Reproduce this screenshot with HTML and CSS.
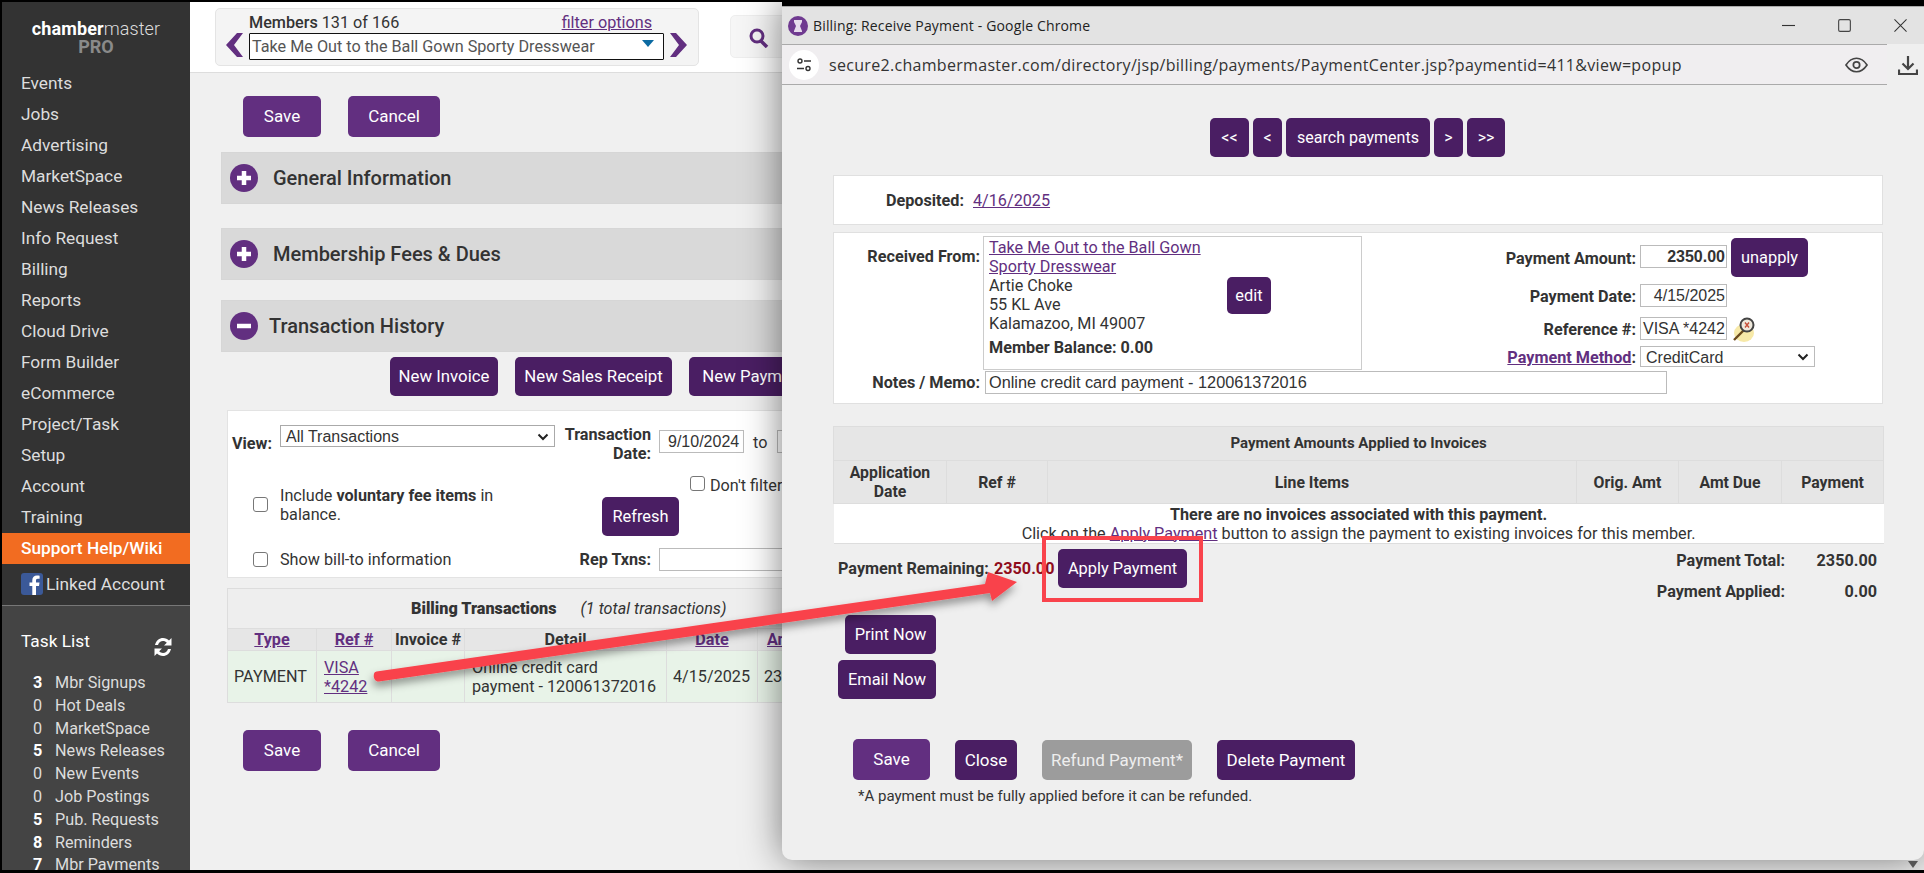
FILE: index.html
```html
<!DOCTYPE html>
<html lang="en">
<head>
<meta charset="utf-8">
<title>Billing: Receive Payment</title>
<link rel="stylesheet" href="styles.css">
</head>
<body>
<div class="page">
  <aside class="sidebar">
    <div class="logo">
      <div class="logo-name"><b>chamber</b>master</div>
      <div class="logo-pro">PRO</div>
    </div>
    <nav class="nav">
      <a>Events</a><a>Jobs</a><a>Advertising</a><a>MarketSpace</a><a>News Releases</a><a>Info Request</a><a>Billing</a><a>Reports</a><a>Cloud Drive</a><a>Form Builder</a><a>eCommerce</a><a>Project/Task</a><a>Setup</a><a>Account</a><a>Training</a><a class="active">Support Help/Wiki</a>
    </nav>
    <div class="linked">
      <svg class="fb" viewBox="0 0 22 22"><rect width="22" height="22" rx="3" fill="#3b5998"/><path d="M15 22v-9h3l.5-3.500H15V7.500c0-1 .4-1.700 1.800-1.700H18.600V2.700C18 2.600 17 2.500 16 2.500c-2.800 0-4.700 1.700-4.700 4.700V9.500H8.500V13h2.800v9z" fill="#fff"/></svg>
      <span>Linked Account</span>
    </div>
    <div class="tasks">
      <div class="task-head">
        <span>Task List</span>
        <svg class="refresh" viewBox="0 0 20 22"><path d="M2 9C3 4.500 6.500 2 10 2c2.500 0 4.500 1 6 2.500L18.500 2v7.500H11l2.800-2.800C12.800 5.700 11.500 5 10 5 7.800 5 5.800 6.500 5 9zM18 13c-1 4.500-4.500 7-8 7-2.500 0-4.500-1-6-2.500L1.500 20v-7.500H9l-2.800 2.800C7.200 16.300 8.500 17 10 17c2.200 0 4.200-1.500 5-4z" fill="#fff"/></svg>
      </div>
      <ul class="task-list">
        <li><b>3</b><span>Mbr Signups</span></li>
        <li><i>0</i><span>Hot Deals</span></li>
        <li><i>0</i><span>MarketSpace</span></li>
        <li><b>5</b><span>News Releases</span></li>
        <li><i>0</i><span>New Events</span></li>
        <li><i>0</i><span>Job Postings</span></li>
        <li><b>5</b><span>Pub. Requests</span></li>
        <li><b>8</b><span>Reminders</span></li>
        <li><b>7</b><span>Mbr Payments</span></li>
      </ul>
    </div>
  </aside>

  <main class="main">
    <header class="topbar">
      <div class="member-box">
        <svg class="chev" viewBox="0 0 17 24"><path d="M11 0 0 12l11 12h6L8 12l9-12z" fill="#622f80"/></svg>
        <div class="member-mid">
          <div class="member-line"><span><b>Members</b> 131 of 166</span><a class="link">filter options</a></div>
          <div class="member-select"><span>Take Me Out to the Ball Gown Sporty Dresswear</span><i class="tri"></i></div>
        </div>
        <svg class="chev" viewBox="0 0 17 24"><path d="M6 0l11 12L6 24H0l9-12L0 0z" fill="#622f80"/></svg>
      </div>
      <div class="search-box">
        <svg class="search" viewBox="0 0 20 20"><circle cx="8" cy="8" r="6" fill="none" stroke="#622f80" stroke-width="3"/><path d="m12 13 6 6" stroke="#622f80" stroke-width="3.500"/></svg>
      </div>
    </header>
    <div class="content">
      <div class="actions">
        <button class="btn light save-main">Save</button>
        <button class="btn light cancel-main">Cancel</button>
      </div>
      <section class="bar"><svg class="round" viewBox="0 0 28 28"><circle cx="14" cy="14" r="14" fill="#622f80"/><path d="M14 7v14M7 14h14" stroke="#fff" stroke-width="4.500"/></svg><h2 class="bar-title">General Information</h2></section>
      <section class="bar second"><svg class="round" viewBox="0 0 28 28"><circle cx="14" cy="14" r="14" fill="#622f80"/><path d="M14 7v14M7 14h14" stroke="#fff" stroke-width="4.500"/></svg><h2 class="bar-title">Membership Fees &amp; Dues</h2></section>
      <section class="bar third"><svg class="round" viewBox="0 0 28 28"><circle cx="14" cy="14" r="14" fill="#622f80"/><path d="M7 14h14" stroke="#fff" stroke-width="4.500"/></svg><h2 class="bar-title tight">Transaction History</h2></section>
      <div class="new-row">
        <button class="btn new-a">New Invoice</button>
        <button class="btn new-b">New Sales Receipt</button>
        <button class="btn new-c">New Payment</button>
      </div>
      <div class="filters">
        <div class="f-row1">
          <label class="f-view">View:</label>
          <div class="f-select"><span>All Transactions</span><svg class="caret" viewBox="0 0 12 8"><path d="m1.500 1.500 4.500 4.500 4.500-4.500" fill="none" stroke="#222" stroke-width="2"/></svg></div>
          <label class="f-date">Transaction<br>Date:</label>
          <div class="f-input date-a">9/10/2024</div>
          <span class="f-to">to</span>
          <div class="f-input date-b"></div>
        </div>
        <div class="f-row2">
          <span class="check c-left"></span>
          <p class="f-include">Include <b>voluntary fee items</b> in balance.</p>
          <button class="btn refresh-btn">Refresh</button>
          <span class="check c-filter"></span>
          <span class="f-filter">Don't filter by date</span>
        </div>
        <div class="f-row3">
          <span class="check c-left"></span>
          <span class="f-bill">Show bill-to information</span>
          <label class="f-rep">Rep Txns:</label>
          <div class="f-input rep"></div>
        </div>
      </div>
      <table class="txn">
        <colgroup><col class="w1"><col class="w2"><col class="w3"><col class="w4"><col class="w5"><col class="w6"></colgroup>
        <thead>
          <tr class="txn-title"><th colspan="6"><div class="txn-cap"><b>Billing Transactions</b><em>(1 total transactions)</em></div></th></tr>
          <tr class="txn-head"><th><a class="link">Type</a></th><th><a class="link">Ref #</a></th><th>Invoice #</th><th>Detail</th><th><a class="link">Date</a></th><th class="amt-head"><a class="link">Amount</a></th></tr>
        </thead>
        <tbody>
          <tr class="txn-row"><td>PAYMENT</td><td class="ref"><a class="link">VISA<br>*4242</a></td><td></td><td class="det">Online credit card<br>payment - 120061372016</td><td>4/15/2025</td><td>2350.00</td></tr>
        </tbody>
      </table>
      <div class="actions lower">
        <button class="btn light save-main">Save</button>
        <button class="btn light cancel-main">Cancel</button>
      </div>
    </div>
  </main>
</div>

<div class="popup">
  <div class="titlebar">
    <svg class="favicon" viewBox="0 0 20 20"><circle cx="10" cy="10" r="10" fill="#6f3a90"/><path d="M6 4h8v2l-2 4 2 5v1H6v-1l2-5-2-4z" fill="#e6dcec"/></svg>
    <span class="win-title">Billing: Receive Payment - Google Chrome</span>
    <div class="win-ctrls">
      <svg viewBox="0 0 14 14"><path d="M0 7h14" stroke="#333" stroke-width="1.200"/></svg>
      <svg viewBox="0 0 14 14"><rect x=".7" y=".7" width="12.600" height="12.600" rx="1.500" fill="none" stroke="#444" stroke-width="1.200"/></svg>
      <svg viewBox="0 0 14 14"><path d="m.5.500 13 13m0-13-13 13" stroke="#333" stroke-width="1.100"/></svg>
    </div>
  </div>
  <div class="urlbar">
    <span class="tune"><svg viewBox="0 0 16 14"><circle cx="4" cy="3" r="2" fill="none" stroke="#333" stroke-width="1.400"/><path d="M8 3h7M1 10.500h7" stroke="#333" stroke-width="1.400"/><circle cx="12" cy="10.500" r="2" fill="none" stroke="#333" stroke-width="1.400"/></svg></span>
    <span class="url">secure2.chambermaster.com/directory/jsp/billing/payments/PaymentCenter.jsp?paymentid=411&amp;view=popup</span>
    <svg class="eye" viewBox="0 0 24 16"><path d="M1 8c3-4.500 7-7 11-7s8 2.500 11 7c-3 4.500-7 7-11 7S4 12.500 1 8z" fill="none" stroke="#444" stroke-width="1.700"/><circle cx="12" cy="8" r="3.300" fill="none" stroke="#444" stroke-width="1.800"/></svg>
    <svg class="dl" viewBox="0 0 20 20"><path d="M10 0v12M4.500 7.500 10 13l5.500-5.500" fill="none" stroke="#444" stroke-width="2.200"/><path d="M1 13.500v4.500h18v-4.500" fill="none" stroke="#444" stroke-width="2.200"/></svg>
  </div>
  <div class="pop-body">
    <div class="pager">
      <button class="btn pg p1">&lt;&lt;</button><button class="btn pg p2">&lt;</button><button class="btn pg p3">search payments</button><button class="btn pg p4">&gt;</button><button class="btn pg p5">&gt;&gt;</button>
    </div>
    <div class="panel deposited"><b class="dep-label">Deposited:</b><a class="link">4/16/2025</a></div>
    <div class="panel payment">
      <div class="pay-grid">
        <b class="lab-from">Received From:</b>
        <div class="from-box">
          <div class="from-text">
            <a class="link">Take Me Out to the Ball Gown<br>Sporty Dresswear</a><br>
            Artie Choke<br>55 KL Ave<br>Kalamazoo, MI 49007
            <div class="balance"><b>Member Balance: 0.00</b></div>
          </div>
          <button class="btn edit">edit</button>
        </div>
        <div class="pay-fields">
          <div class="pf r1"><b class="lab">Payment Amount:</b><span class="inp amount">2350.00</span><button class="btn unapply">unapply</button></div>
          <div class="pf r2"><b class="lab">Payment Date:</b><span class="inp right">4/15/2025</span></div>
          <div class="pf r3"><b class="lab">Reference #:</b><span class="inp">VISA *4242</span>
            <svg class="key" viewBox="0 0 22 29"><ellipse cx="11" cy="19" rx="10" ry="9" fill="#f7e9a8"/><path d="m1 26 10-10" stroke="#6b4a1c" stroke-width="2.400"/><circle cx="14" cy="11" r="6.500" fill="#efe9dc" stroke="#444" stroke-width="2"/><path d="m12 8.500 4 5m0-5-4 5" stroke="#c8503a" stroke-width="1.400"/></svg>
          </div>
          <div class="pf r4"><b class="lab"><a class="link">Payment Method</a>:</b><span class="inp sel">CreditCard<svg class="caret" viewBox="0 0 12 8"><path d="m1.500 1.500 4.500 4.500 4.500-4.500" fill="none" stroke="#222" stroke-width="2"/></svg></span></div>
        </div>
      </div>
      <div class="notes"><b class="lab-notes">Notes / Memo:</b><span class="inp memo">Online credit card payment - 120061372016</span></div>
    </div>
    <table class="applied">
      <colgroup><col class="a1"><col class="a2"><col class="a3"><col class="a4"><col class="a5"><col class="a6"></colgroup>
      <thead>
        <tr class="ap-title"><th colspan="6">Payment Amounts Applied to Invoices</th></tr>
        <tr class="ap-head"><th>Application<br>Date</th><th>Ref #</th><th>Line Items</th><th>Orig. Amt</th><th>Amt Due</th><th>Payment</th></tr>
      </thead>
      <tbody>
        <tr class="ap-body"><td colspan="6"><b>There are no invoices associated with this payment.</b><br>Click on the <a class="link">Apply Payment</a> button to assign the payment to existing invoices for this member.</td></tr>
      </tbody>
    </table>
    <div class="totals">
      <div class="remaining">
        <b class="rem-label">Payment Remaining:</b><b class="red">2350.00</b><button class="btn apply">Apply Payment</button>
      </div>
      <div class="sums">
        <div class="sum"><b>Payment Total:</b><b class="val">2350.00</b></div>
        <div class="sum"><b>Payment Applied:</b><b class="val">0.00</b></div>
      </div>
    </div>
    <div class="now">
      <button class="btn print">Print Now</button>
      <button class="btn email">Email Now</button>
    </div>
    <div class="foot">
      <button class="btn light f-save">Save</button>
      <button class="btn f-close">Close</button>
      <button class="btn grey f-refund">Refund Payment*</button>
      <button class="btn f-delete">Delete Payment</button>
    </div>
    <p class="note">*A payment must be fully applied before it can be refunded.</p>
  </div>
</div>

<i class="scroll-tri"></i>
<div class="highlight"></div>
<svg class="arrow" viewBox="0 0 1924 873">
  <defs><filter id="sh" x="-5%" y="-20%" width="110%" height="150%"><feDropShadow dx="-1" dy="5" stdDeviation="4" flood-color="#000" flood-opacity=".4"/></filter></defs>
  <path d="M376.500 671.500 985 584 988 572 1017 582 992 601 990 593 379 681.500C373 682 372 672 376.500 671.500z" fill="#f9434c" filter="url(#sh)"/>
</svg>
```

FILE: styles.css
```css
* { box-sizing: border-box; }
html, body { margin: 0; height: 873px; width: 1924px; overflow: hidden; background: #000; }
body { position: relative; font-family: Roboto, "Liberation Sans", sans-serif; font-size: 16.200px; color: #333; }
button { font: inherit; }
p, h2, ul { margin: 0; padding: 0; }
.link { color: #622f80; text-decoration: underline; }

.page { display: flex; height: 868px; margin: 2px 0 0 2px; }

/* sidebar */
.sidebar { width: 188px; flex: none; background: #333; color: #ddd; display: flex; flex-direction: column; }
.logo { height: 66px; flex: none; text-align: center; padding-top: 17px; }
.logo-name { font-size: 18px; line-height: 19px; letter-spacing: .1px; color: #ddd; font-weight: 300; }
.logo-name b { color: #fff; font-weight: 700; }
.logo-pro { font-size: 18px; line-height: 18px; font-weight: 700; color: #8a8a8a; }
.nav { flex: none; }
.nav a { display: block; height: 31px; line-height: 31px; padding-left: 19px; font-size: 17.300px; }
.nav .active { background: #f26c21; color: #fff; font-weight: 500; }
.linked { height: 42px; flex: none; border-bottom: 1px solid #777; display: flex; align-items: center; gap: 3px; padding: 0 0 2px 19px; font-size: 17.300px; }
.fb { width: 22px; height: 22px; }
.tasks { flex: 1; min-height: 0; overflow: hidden; background: #444; padding: 0 0 0 19px; }
.task-head { display: flex; align-items: center; justify-content: space-between; width: 152px; padding-top: 18px; height: 52px; color: #fff; font-size: 17.300px; }
.refresh { width: 20px; height: 22px; margin-top: 11px; }
.task-list { list-style: none; margin-top: 14px; font-size: 16.200px; }
.task-list li { display: flex; height: 22.800px; line-height: 22.800px; padding-left: 12px; }
.task-list b, .task-list i { width: 22px; font-style: normal; }
.task-list b { font-weight: 700; color: #fff; }

/* top */
.main { flex: 1; min-width: 0; background: #f0f0f0; }
.topbar { height: 71px; background: #fff; border-bottom: 1px solid #ddd; display: flex; align-items: flex-start; padding-left: 25px; }
.member-box { width: 484px; height: 58px; margin-top: 6px; background: #f4f4f4; border: 1px solid #e4e4e4; border-radius: 5px; display: flex; align-items: flex-end; padding: 0 11px 5px 10px; gap: 6px; }
.chev { width: 17px; height: 24px; margin-bottom: 3px; flex: none; }
.member-mid { flex: 1; }
.member-line { display: flex; justify-content: space-between; padding: 0 12px 0 0; line-height: 20px; }
.member-line b { font-weight: 500; }
.member-select { height: 27px; border: 1px solid #111; background: #fff; display: flex; justify-content: space-between; padding: 0 9px 0 2px; line-height: 25px; color: #555; border-radius: 1px; }
.tri { width: 0; height: 0; border: 6px solid transparent; border-top: 7px solid #0b6aa2; border-bottom: 0; margin-top: 6px; }
.search-box { width: 300px; height: 43px; margin: 13px 0 0 31px; background: #f6f6f6; border: 1px solid #eee; border-radius: 5px; padding: 12px 0 0 18px; }
.search { width: 20px; height: 20px; display: block; }

.content { padding: 23px 30px 0 31px; }
.actions { display: flex; gap: 27px; padding-left: 22px; }
.lower { margin-top: 27px; }
.btn { border: 0; border-radius: 5px; background: #4a1e63; color: #fff; font-family: Roboto, sans-serif; font-size: 16.400px; padding: 0 0 1px; text-align: center; flex: none; }
.btn.light { background: #622f80; }
.btn.grey { background: #9c9c9c; color: #eee; }
.save-main { width: 78px; height: 41px; font-size: 17px; }
.cancel-main { width: 92px; height: 41px; font-size: 17px; }

.bar { height: 52px; margin-top: 15px; background: #d9d9d9; display: flex; align-items: center; padding-left: 8px; border: 1px solid #d6d6d6; }
.second { margin-top: 24px; }
.third { margin-top: 20px; }
.round { width: 28px; height: 28px; flex: none; }
.bar-title { font-weight: 500; font-size: 20px; margin-left: 15px; color: #333; }
.tight { margin-left: 11px; }

.new-row { display: flex; padding: 5px 0 0 169px; gap: 17px; }
.new-row .btn { font-size: 16.800px; }
.new-a { width: 108px; height: 39px; }
.new-b { width: 157px; height: 39px; }
.new-c { width: 130px; height: 39px; }

.filters { margin: 14px 0 0 6px; height: 168px; background: #fff; border: 1px solid #e3e3e3; }
.f-row1 { display: flex; height: 65px; padding-top: 14px; }
.f-view { width: 52px; padding: 9px 0 0 4px; font-weight: 700; }
.f-select { width: 275px; height: 22px; border: 1px solid #aaa; display: flex; justify-content: space-between; align-items: center; padding: 1px 5px 0; font-family: "Liberation Sans", sans-serif; font-size: 16px; }
.caret { width: 12px; height: 8px; }
.f-date { width: 96px; font-weight: 700; text-align: right; line-height: 19px; }
.f-input { height: 23px; border: 1px solid #bbb; background: #fff; line-height: 21px; padding: 0 8px; font-family: "Liberation Sans", sans-serif; font-size: 16px; }
.date-a { width: 85px; margin: 5px 0 0 8px; }
.f-to { margin: 8px 0 0 9px; }
.date-b { width: 90px; margin: 5px 0 0 10px; }
.f-row2 { display: flex; height: 68px; }
.check { display: block; width: 15px; height: 15px; border: 1px solid #777; border-radius: 3px; background: #fff; flex: none; }
.c-left { margin: 21px 0 0 25px; }
.f-include { width: 322px; margin: 10px 0 0 12px; padding-right: 85px; line-height: 19px; }
.refresh-btn { width: 77px; height: 39px; margin-top: 21px; }
.c-filter { margin: 0 0 0 11px; }
.f-filter { margin-left: 5px; }
.f-row3 { display: flex; height: 34px; }
.f-row3 .c-left { margin-top: 8px; }
.f-bill { width: 275px; margin: 6px 0 0 12px; }
.f-rep { width: 96px; text-align: right; font-weight: 700; margin-top: 6px; }
.rep { width: 260px; margin: 4px 0 0 8px; }

.txn { width: 1000px; margin: 10px 0 0 6px; border-collapse: collapse; table-layout: fixed; }
.w1 { width: 89px; } .w2 { width: 75px; } .w3 { width: 73px; } .w4 { width: 202px; } .w5 { width: 91px; } .w6 { width: 470px; }
.txn th, .txn td { border: 1px solid #ddd; padding: 0; }
.txn-title th { height: 40px; background: #eee; font-weight: 700; }
.txn-cap { display: flex; justify-content: flex-start; gap: 24px; padding-left: 183px; }
.txn-cap em { font-weight: 400; }
.txn-head th { height: 22px; background: #e6e6e6; font-weight: 700; }
.txn-head .amt-head { text-align: left; padding-left: 9px; }
.txn-row td { height: 52px; background: #e8f3e8; padding-left: 6px; line-height: 19px; }
.txn-row .ref { padding-left: 7px; }
.txn-row .det { padding-left: 7px; }

/* popup */
.popup { position: absolute; left: 782px; top: 0; right: 0; height: 860px; border-top: 6px solid #000; background: #efefef; border-radius: 0 0 10px 10px; box-shadow: 0 0 38px rgba(0,0,0,.5); }
.titlebar { height: 38px; background: #e3e3e3; border-top: 1px solid #aaa; display: flex; align-items: center; padding-left: 6px; font-family: "Open Sans", sans-serif; font-size: 14px; letter-spacing: .15px; color: #222; }
.favicon { width: 20px; height: 20px; margin-right: 5px; }
.win-ctrls { margin-left: auto; display: flex; gap: 43px; padding-right: 17px; }
.win-ctrls svg { width: 13px; height: 13px; display: block; }
.urlbar { height: 41px; background: #f0eef0; border-top: 1px solid #aaa; border-bottom: 1px solid #aaa; margin-right: 37px; display: flex; align-items: center; padding-left: 7px; position: relative; font-family: "Open Sans", sans-serif; font-size: 16px; letter-spacing: .31px; color: #333; }
.tune { width: 30px; height: 30px; border-radius: 50%; background: #fff; display: flex; align-items: center; justify-content: center; flex: none; }
.tune svg { width: 16px; height: 14px; }
.url { margin-left: 10px; white-space: nowrap; }
.eye { width: 23px; height: 16px; margin-left: auto; margin-right: 19px; }
.dl { position: absolute; left: 1116px; top: 11px; width: 20px; height: 20px; }

.pop-body { padding: 33px 41px 0 51px; }
.pager { display: flex; justify-content: flex-start; gap: 4px; padding-left: 377px; }
.pg { height: 39px; }
.pager .btn { font-size: 16px; }
.p1 { width: 39px; } .p2 { width: 29px; } .p3 { width: 144px; } .p4 { width: 29px; } .p5 { width: 38px; }
.panel { background: #fff; border: 1px solid #e0e0e0; }
.deposited { height: 50px; margin-top: 18px; display: flex; align-items: center; padding-left: 52px; gap: 9px; }
.payment { height: 172px; margin-top: 7px; }
.pay-grid { display: flex; height: 137px; }
.lab-from { width: 149px; flex: none; text-align: right; padding-top: 14px; padding-right: 3px; }
.from-box { width: 379px; flex: none; height: 134px; margin-top: 3px; border: 1px solid #ccc; display: flex; padding: 1px 0 0 5px; }
.from-text { width: 238px; line-height: 19px; }
.balance { margin-top: 5px; }
.edit { width: 44px; height: 37px; margin: 39px 0 0 0; }
.pay-fields { flex: 1; padding-top: 5px; }
.pf { display: flex; align-items: flex-start; }
.lab { width: 274px; flex: none; text-align: right; }
.inp { display: block; border: 1px solid #bbb; background: #fff; height: 23px; line-height: 21px; padding: 0 1px 0 2px; font-family: "Liberation Sans", sans-serif; font-size: 16px; }
.r1 { height: 46px; }
.r2 { height: 33px; }
.r3 { height: 29px; }
.r1 .lab { padding-top: 11px; }
.r2 .lab, .r3 .lab { padding-top: 3px; }
.r4 .lab { padding-top: 2px; }
.pf .inp { margin-left: 4px; width: 87px; flex: none; }
.r1 .inp { margin-top: 7px; }
.pf .amount { font-weight: 700; text-align: right; }
.pf .right { text-align: right; }
.r3 .inp { white-space: nowrap; overflow: hidden; }
.unapply { width: 77px; height: 39px; margin-left: 4px; }
.key { width: 22px; height: 29px; margin: -3px 0 0 6px; flex: none; }
.pf .sel { width: 175px; height: 21px; line-height: 19px; display: flex; justify-content: space-between; align-items: center; padding: 1px 5px 0; }
.notes { display: flex; align-items: center; padding-top: 1px; }
.lab-notes { width: 149px; flex: none; text-align: right; padding-right: 3px; }
.memo { width: 682px; margin-left: 2px; padding-left: 3px; font-size: 16.300px; }

.applied { width: 1050px; margin-top: 22px; border-collapse: collapse; table-layout: fixed; }
.a1 { width: 113px; } .a2 { width: 101px; } .a3 { width: 529px; } .a4 { width: 102px; } .a5 { width: 103px; } .a6 { width: 102px; }
.applied th { background: #e6e6e6; border: 1px solid #ddd; font-weight: 700; padding: 0; line-height: 19px; font-size: 15.800px; }
.applied .ap-title th { height: 34px; font-size: 15px; }
.ap-head th { height: 43px; }
.ap-body td { background: #fff; height: 40px; text-align: center; line-height: 19px; padding: 0; border-bottom: 1px solid #ddd; }

.totals { display: flex; justify-content: space-between; height: 71px; padding: 5px 6px 0 5px; }
.remaining { display: flex; align-items: center; height: 39px; }
.rem-label { width: 152px; white-space: nowrap; }
.red { color: #8f0d1c; width: 64px; margin-left: 4px; }
.apply { width: 129px; height: 39px; }
.sums { width: 300px; padding-top: 2px; }
.sum { display: flex; justify-content: flex-end; height: 31px; align-items: flex-start; }
.sum .val { width: 92px; text-align: right; }
.now { display: flex; flex-direction: column; align-items: flex-end; width: 103px; gap: 6px; }
.print { width: 91px; height: 39px; }
.email { width: 98px; height: 39px; }
.foot { display: flex; padding: 40px 0 0 20px; gap: 25px; align-items: flex-end; }
.foot .btn { font-size: 17px; }
.f-save { width: 77px; height: 41px; }
.f-close { width: 62px; height: 40px; }
.f-refund { width: 150px; height: 40px; }
.f-delete { width: 138px; height: 40px; }
.note { font-size: 15px; margin: 7px 0 0 25px; }

.scroll-tri { position: absolute; left: 1908px; top: 861px; width: 0; height: 0; border: 5px solid transparent; border-top: 7px solid #555; border-bottom: 0; }
.highlight { position: absolute; left: 1042px; top: 536px; width: 161px; height: 66px; border: 4px solid #f9434c; }
.arrow { position: absolute; left: 0; top: 0; width: 1924px; height: 873px; pointer-events: none; }
```
